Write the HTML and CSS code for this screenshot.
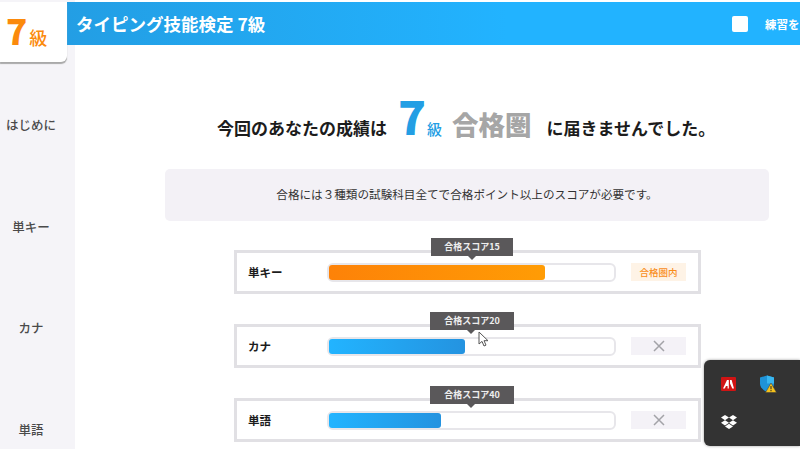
FILE: index.html
```html
<!DOCTYPE html>
<html lang="ja">
<head>
  <meta charset="UTF-8" />
  <meta name="viewport" content="width=device-width, initial-scale=1.0"/>
  <title>タイピング技能検定 7級</title>
  <link rel="stylesheet" href="styles.css">
</head>
<body>
  <div class="app">
    <aside class="sidebar">
      <div class="grade-tile"><span class="grade-num">7</span><span class="grade-kyu">級</span></div>
      <nav class="side-nav">
        <div class="side-item">はじめに</div>
        <div class="side-item">単キー</div>
        <div class="side-item">カナ</div>
        <div class="side-item">単語</div>
      </nav>
    </aside>

    <div class="main">
      <header class="topbar">
        <h1>タイピング技能検定 7級</h1>
        <div class="practice">
          <span class="checkbox"></span>
          <span class="practice-label">練習を</span>
        </div>
      </header>

      <div class="content">
        <h2 class="result">
          <span>今回のあなたの成績は</span>
          <span class="result-grade"><b class="big-seven">7</b><span class="small-kyu">級</span></span>
          <span class="pass-zone">合格圏</span>
          <span>に届きませんでした。</span>
        </h2>

        <p class="notice">合格には３種類の試験科目全てで合格ポイント以上のスコアが必要です。</p>

        <div class="score-row">
          <div class="tip tip-small">合格スコア15</div>
          <div class="score-name">単キー</div>
          <div class="bar"><div class="fill fill-orange fill-key"></div></div>
          <div class="status status-ok">合格圏内</div>
        </div>

        <div class="score-row">
          <div class="tip">合格スコア20</div>
          <div class="score-name">カナ</div>
          <div class="bar"><div class="fill fill-blue fill-kana"></div></div>
          <div class="status">
            <svg width="12" height="12" viewBox="0 0 12 12"><path d="M1 1l10 10M11 1L1 11" stroke="#a3a3a8" stroke-width="1.5" fill="none"/></svg>
          </div>
        </div>

        <div class="score-row">
          <div class="tip">合格スコア40</div>
          <div class="score-name">単語</div>
          <div class="bar"><div class="fill fill-blue fill-word"></div></div>
          <div class="status">
            <svg width="12" height="12" viewBox="0 0 12 12"><path d="M1 1l10 10M11 1L1 11" stroke="#a3a3a8" stroke-width="1.5" fill="none"/></svg>
          </div>
        </div>
      </div>
    </div>
  </div>

  <!-- mouse pointer -->
  <svg class="cursor" width="12" height="17" viewBox="0 0 12 17">
    <path d="M1 1v12l3-2.600 2 4.600 2-.9-2-4.400h4z" fill="#fff" stroke="#555" stroke-width="1"/>
  </svg>

  <!-- system tray popup -->
  <div class="tray">
    <svg class="tray-icon" width="15" height="14" viewBox="0 0 15 14">
      <rect width="15" height="14" rx="1" fill="#d01414"/>
      <path d="M2 11.500L6 3h1.800v8.500H6.600V9H5l-1.200 2.500zM9 3h1.600L13 11.500h-1.700L9 6.500z" fill="#fff"/>
    </svg>
    <svg class="tray-icon" width="18" height="18" viewBox="0 0 18 18">
      <path d="M1 2.500L8 .5l7 2v6c0 4-3 6.500-7 8.500-4-2-7-4.500-7-8.500z" fill="#1f93d8"/>
      <path d="M8 .5l7 2v6H8z" fill="#38b6f0"/>
      <path d="M12 8l5.500 9.500h-11z" fill="#f6c21c" stroke="#3a3a3a" stroke-width=".5"/>
      <path d="M11.500 11h1v3.300h-1zM11.500 15h1v1.200h-1z" fill="#222"/>
    </svg>
    <svg class="tray-icon" width="16" height="15" viewBox="0 0 16 15">
      <path d="M4 0L8 2.600 4 5.200 0 2.600zM12 0l4 2.600-4 2.600-4-2.600zM4 5.200l4 2.600-4 2.600-4-2.600zM12 5.200l4 2.600-4 2.600-4-2.600zM4 11.400L8 8.800l4 2.600L8 14z" fill="#fff"/>
    </svg>
  </div>
</body>
</html>
```

FILE: styles.css
```css
* {
  box-sizing: border-box;
}

html, body {
  margin: 0;
  padding: 0;
  height: 449px;
  overflow: hidden;
}

body {
  font-family: "Noto Sans CJK JP", "Noto Sans", sans-serif;
  background-color: #fff;
  color: #1c1c1c;
}

.app {
  display: flex;
  width: 800px;
  height: 449px;
}

.sidebar {
  width: 75px;
  flex: none;
  background-color: #f5f4f8;
  padding-top: 2px;
}

.grade-tile {
  width: 67px;
  height: 60px;
  padding-left: 6px;
  background-color: #fff;
  border-bottom-right-radius: 6px;
  box-shadow: 0 2px 1px #a9a9a9;
  color: #fb8a0c;
  display: flex;
  align-items: baseline;
  line-height: 56px;
  position: relative;
  z-index: 2;
}

.grade-num {
  font-size: 35px;
  font-weight: 900;
  margin-right: 2px;
}

.grade-kyu {
  font-size: 18px;
  font-weight: 500;
}

.side-nav {
  margin-top: 54px;
  display: flex;
  flex-direction: column;
  gap: 83.500px;
}

.side-item {
  width: 62px;
  height: 18px;
  text-align: center;
  font-size: 12.500px;
  font-weight: 500;
  line-height: 18px;
  color: #4a4a4a;
}

.main {
  flex: 1;
  min-width: 0;
}

.topbar {
  height: 43px;
  margin-top: 2px;
  margin-left: -8px;
  padding-left: 9px;
  background: linear-gradient(to right, #239ee4, #22b3ff 60%);
  display: flex;
  align-items: center;
  justify-content: space-between;
  color: #fff;
  position: relative;
}

.topbar h1 {
  margin: 0;
  font-size: 17.500px;
  font-weight: 700;
  line-height: 20px;
}

.practice {
  display: flex;
  align-items: center;
  width: 68px;
  flex: none;
}

.checkbox {
  width: 16px;
  height: 16px;
  background-color: #fff;
  border-radius: 2px;
  margin-right: 17px;
  flex: none;
}

.practice-label {
  font-size: 11.500px;
  font-weight: 700;
  white-space: nowrap;
}

.content {
  padding-top: 40px;
}

.result {
  margin: 0 0 0 142px;
  height: 84px;
  display: flex;
  align-items: baseline;
  font-size: 17px;
  font-weight: 700;
  line-height: 60px;
  white-space: nowrap;
}

.result-grade {
  color: #239ee4;
  margin-left: 11px;
  margin-right: 10px;
}

.big-seven {
  font-size: 46px;
  font-weight: 900;
  margin-right: 1px;
}

.small-kyu {
  font-size: 15px;
  font-weight: 500;
}

.pass-zone {
  font-size: 26.500px;
  font-weight: 900;
  color: #a6a6a6;
  margin-right: 15px;
}

.notice {
  margin: 0 31px 0 90px;
  height: 52px;
  background-color: #f3f1f6;
  border-radius: 5px;
  text-align: center;
  font-size: 11.600px;
  line-height: 50px;
  color: #333;
}

.score-row {
  position: relative;
  width: 467px;
  height: 44px;
  margin: 30px 0 0 159px;
  border: 3px solid #e1e0e4;
  display: flex;
  align-items: center;
}

.score-row:first-of-type {
  margin-top: 29px;
}

.score-name {
  width: 90px;
  padding-left: 11px;
  font-size: 11.500px;
  font-weight: 700;
  flex: none;
}

.bar {
  width: 289px;
  height: 19px;
  border: 2px solid #e7e6ea;
  border-radius: 6px;
  background-color: #fff;
  flex: none;
}

.fill {
  height: 15px;
  border-radius: 3px;
}

.fill-orange {
  background: linear-gradient(to right, #fd8208, #ff9c05);
}

.fill-blue {
  background: linear-gradient(to right, #22b4ff, #2493e0);
}

/* widths of the three score bars */
.fill-key {
  width: 216px;
}

.fill-kana {
  width: 136px;
}

.fill-word {
  width: 112px;
}

.status {
  width: 55px;
  height: 18px;
  margin-left: 15px;
  background-color: #f4f2f7;
  display: flex;
  align-items: center;
  justify-content: center;
  flex: none;
}

.status-ok {
  background-color: #fef3e6;
  color: #f98d1b;
  font-size: 9.500px;
  font-weight: 500;
}

.tip {
  position: absolute;
  left: 193px;
  top: -15px;
  width: 84px;
  height: 18px;
  background-color: #5a585a;
  color: #eee;
  font-size: 9px;
  font-weight: 700;
  line-height: 17px;
  text-align: center;
}

.tip-small {
  left: 194px;
  width: 82px;
}

.tip::after {
  content: "";
  position: absolute;
  left: 37px;
  top: 18px;
  border-left: 4px solid transparent;
  border-right: 4px solid transparent;
  border-top: 4px solid #5a585a;
}

.cursor {
  position: absolute;
  left: 478px;
  top: 331px;
}

.tray {
  position: absolute;
  left: 704px;
  top: 360px;
  width: 96px;
  height: 86px;
  background-color: #333;
  border-radius: 6px 0 0 6px;
  box-shadow: 0 0 3px rgba(0,0,0,0.4);
  display: grid;
  grid-template-columns: repeat(2, 39px);
  grid-auto-rows: 38px;
  align-items: center;
  justify-items: center;
  padding: 5px 0 0 5px;
}

.tray-icon {
  display: block;
}
```
